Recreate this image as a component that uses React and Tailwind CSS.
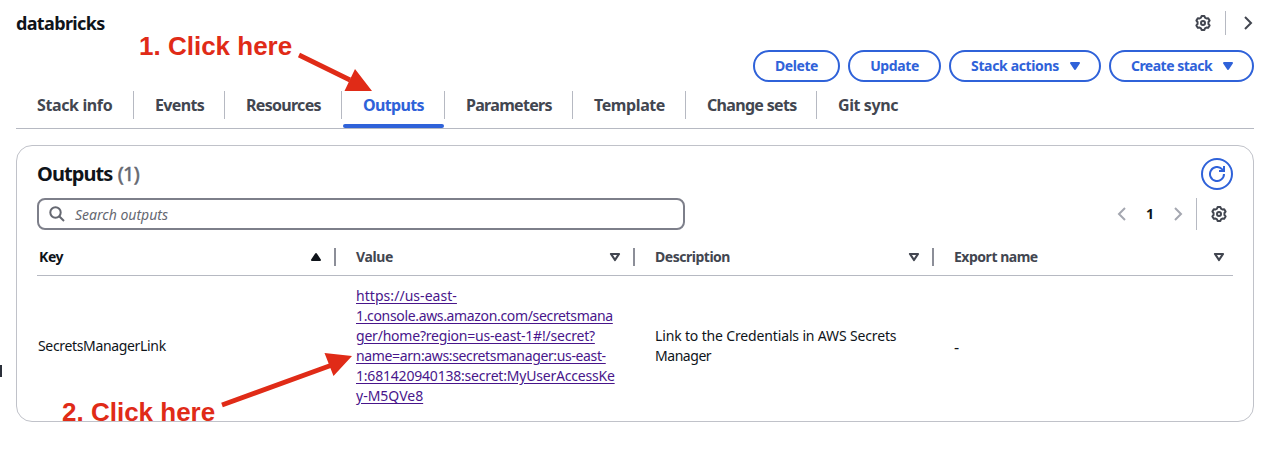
import React from "react";

const tabs = [
  { label: "Stack info", cls: "w-[118px] border-r tracking-[-0.38px]" },
  { label: "Events", cls: "w-[91px] border-r tracking-[-0.65px]" },
  { label: "Resources", cls: "w-[117px] border-r tracking-[-0.7px]" },
  { label: "Outputs", cls: "w-[103px] border-r tracking-[-0.65px]", active: true },
  { label: "Parameters", cls: "w-[128px] border-r tracking-[-0.7px]" },
  { label: "Template", cls: "w-[113px] border-r tracking-[-0.4px]" },
  { label: "Change sets", cls: "w-[131px] border-r tracking-[-0.68px]" },
  { label: "Git sync", cls: "w-[102px] tracking-[-0.4px]" },
];

const buttons = [
  { label: "Delete", cls: "w-[87px] tracking-[-0.45px]" },
  { label: "Update", cls: "w-[93px] tracking-[-0.4px]" },
  { label: "Stack actions", cls: "w-[152px] pl-[4px] tracking-[-0.35px]", menu: true },
  { label: "Create stack", cls: "w-[145px] pl-[4px] tracking-[-0.5px]", menu: true },
];

const columns = [
  { label: "Key", cls: "w-[299px] pl-[2px] text-[#0f141a] tracking-[-0.4px]", sort: "up" },
  { label: "Value", cls: "w-[299px] pl-[20px] text-[#424650] tracking-[-0.4px]", sort: "down" },
  { label: "Description", cls: "w-[299px] pl-[20px] text-[#424650] tracking-[-0.48px]", sort: "down" },
  { label: "Export name", cls: "w-[299px] pl-[20px] text-[#424650] tracking-[-0.48px]", sort: "down", last: true },
];

const linkLines = [
  { text: "https://us-east-", cls: "tracking-[0.05px]" },
  { text: "1.console.aws.amazon.com/secretsmana", cls: "tracking-[-0.34px]" },
  { text: "ger/home?region=us-east-1#!/secret?", cls: "tracking-[-0.21px]" },
  { text: "name=arn:aws:secretsmanager:us-east-", cls: "tracking-[-0.36px]" },
  { text: "1:681420940138:secret:MyUserAccessKe", cls: "tracking-[-0.2px]" },
  { text: "y-M5QVe8", cls: "tracking-[0px]" },
];

function Gear() {
  return (
    <svg className="size-4 text-[#424650]" viewBox="0 0 16 16" fill="none" stroke="currentColor" strokeWidth="2" strokeLinejoin="round">
      <path d="M6.600 1h2.800l.6 1.700 1.400.8 1.800-.35 1.400 2.450-1.150 1.400v2l1.150 1.400-1.400 2.450-1.800-.35-1.400.8-.6 1.700H6.600L6 13.300l-1.400-.8-1.800.35L1.400 10.400 2.550 9V7L1.400 5.600l1.400-2.450 1.800.35L6 2.700z" />
      <circle cx="8" cy="8" r="2" />
    </svg>
  );
}

function Chevron({ left, className }) {
  return (
    <svg className={className} viewBox="0 0 16 16" fill="none" stroke="currentColor" strokeWidth="2">
      <path d={left ? "M11 2 5 8l6 6" : "m5 2 6 6-6 6"} />
    </svg>
  );
}

function Caret({ type, className }) {
  const d = type === "up" ? "M4 11h8L8 5z" : "M4 5h8l-4 6z";
  return (
    <svg className={className} viewBox="0 0 16 16" fill={type === "down" ? "none" : "currentColor"} stroke="currentColor" strokeWidth={type === "down" ? "2.2" : "2"} strokeLinejoin="round">
      <path d={d} />
    </svg>
  );
}

export default function App() {
  return (
    <div className="relative h-[452px] w-[1277px] overflow-hidden bg-white font-['Noto_Sans','Open_Sans',sans-serif] text-[14px] leading-5 text-[#0f141a]">
      <div className="pl-4 pr-[23px]">
        <header className="flex h-[50px] items-start justify-between">
          <h1 className="pt-[12px] text-[18px] font-bold leading-[22px] tracking-[-0.65px]">databricks</h1>
          <div className="mt-[11px] -mr-[2px] flex h-6 items-center">
            <Gear />
            <div className="ml-[14px] h-6 w-px bg-[#b6b9c2]" />
            <Chevron className="ml-[14px] size-4 text-[#424650]" />
          </div>
        </header>

        <div className="flex h-8 justify-end gap-2">
          {buttons.map((b) => (
            <button key={b.label} className={`${b.cls} flex h-8 items-center justify-center gap-2 rounded-full border-2 border-[#2f62d9] font-bold text-[#2f62d9]`}>
              {b.label}
              {b.menu && <Caret type="fill" className="size-4" />}
            </button>
          ))}
        </div>

        <nav className="flex h-[47px] items-start border-b border-[#b6b9c2] pt-[9px]">
          {tabs.map((t) => (
            <div key={t.label} className={`${t.cls} relative flex h-7 items-center whitespace-nowrap border-[#b6b9c2] pl-[21px] text-[16px] font-bold ${t.active ? "text-[#2f62d9]" : "text-[#424650]"}`}>
              {t.label}
              {t.active && <span className="absolute -bottom-[9px] left-[1px] h-1 w-[101px] rounded-full bg-[#2f62d9]" />}
            </div>
          ))}
        </nav>

        <section className="mt-4 h-[277px] rounded-[16px] border border-[#c0c2c9] px-5 pt-3">
          <div className="flex h-8 items-center justify-between">
            <h2 className="text-[20px] font-bold leading-6 tracking-[-0.93px]">
              Outputs <span className="ml-px font-normal tracking-[-0.6px] text-[#656871] [-webkit-text-stroke:0.5px_#656871]">(1)</span>
            </h2>
            <button className="flex size-8 items-center justify-center rounded-full border-2 border-[#2f62d9] text-[#2f62d9]">
              <svg className="size-4" viewBox="0 0 16 16" fill="none" stroke="currentColor" strokeWidth="2">
                <path d="M15 8a7 7 0 1 1-2-4.900L15 5" />
                <path d="M10 5h5V0" />
              </svg>
            </button>
          </div>

          <div className="mt-2 flex h-8 items-center justify-between">
            <div className="flex h-8 w-[648px] items-center gap-[10px] rounded-lg border-2 border-[#7d7f8a] pl-[10px] text-[#656871]">
              <svg className="size-4" viewBox="0 0 16 16" fill="none" stroke="currentColor" strokeWidth="2">
                <circle cx="6.5" cy="6.5" r="5.2" />
                <path d="m10.2 10.2 4.8 4.8" />
              </svg>
              <span className="pt-px italic">Search outputs</span>
            </div>
            <div className="flex h-8 items-center pr-[6px]">
              <Chevron left className="size-4 text-[#a4a7b0]" />
              <span className="w-[40px] text-center font-bold">1</span>
              <Chevron className="size-4 text-[#a4a7b0]" />
              <div className="ml-[10px] mr-[14px] h-8 w-px bg-[#b6b9c2]" />
              <Gear />
            </div>
          </div>

          <div className="flex h-[46px] border-b border-[#b6b9c2] pt-[17px]">
            {columns.map((c) => (
              <div key={c.label} className={`${c.cls} flex h-5 items-center justify-between font-bold`}>
                <span>{c.label}</span>
                <div className="flex items-center">
                  <Caret type={c.sort} className={c.last ? "mr-[6px] size-4" : "mr-[10px] size-4"} />
                  {!c.last && <span className="h-[18px] w-[2px] bg-[#8c8e98]" />}
                </div>
              </div>
            ))}
          </div>

          <div className="flex h-[140px] items-center">
            <div className="w-[299px] pl-[1px] tracking-[-0.34px]">SecretsManagerLink</div>
            <div className="w-[299px] pl-[20px]">
              <a className="flex flex-col items-start whitespace-nowrap text-[#48168b]">
                {linkLines.map((l) => (
                  <span key={l.text} className={`${l.cls} underline underline-offset-2`}>{l.text}</span>
                ))}
              </a>
            </div>
            <div className="w-[299px] pl-[20px]">
              <span className="tracking-[-0.15px]">Link to the Credentials in AWS Secrets</span>
              <br />
              <span className="tracking-[-0.45px]">Manager</span>
            </div>
            <div className="pl-[20px] pt-px text-[16px]">-</div>
          </div>
        </section>
      </div>

      <div className="absolute left-0 top-[365px] h-3 w-[2px] bg-[#2b303a]" />
      <div className="absolute left-[139px] top-[31px] whitespace-nowrap font-['Liberation_Sans',sans-serif] text-[26px] font-bold leading-[30px] text-[#e02b17]">1. Click here</div>
      <div className="absolute left-[62px] top-[397px] whitespace-nowrap font-['Liberation_Sans',sans-serif] text-[26px] font-bold leading-[30px] text-[#e02b17]">2. Click here</div>
      <svg className="absolute left-0 top-0 h-[452px] w-[1277px] text-[#e02b17]" viewBox="0 0 1277 452" fill="currentColor" stroke="currentColor">
        <path d="M299 55 350 80M222 405l110-40" strokeWidth="4.8" fill="none" />
        <path d="M355 69 372 91H344.500zM324.500 353 352 356 333.500 376z" stroke="none" />
      </svg>
    </div>
  );
}
